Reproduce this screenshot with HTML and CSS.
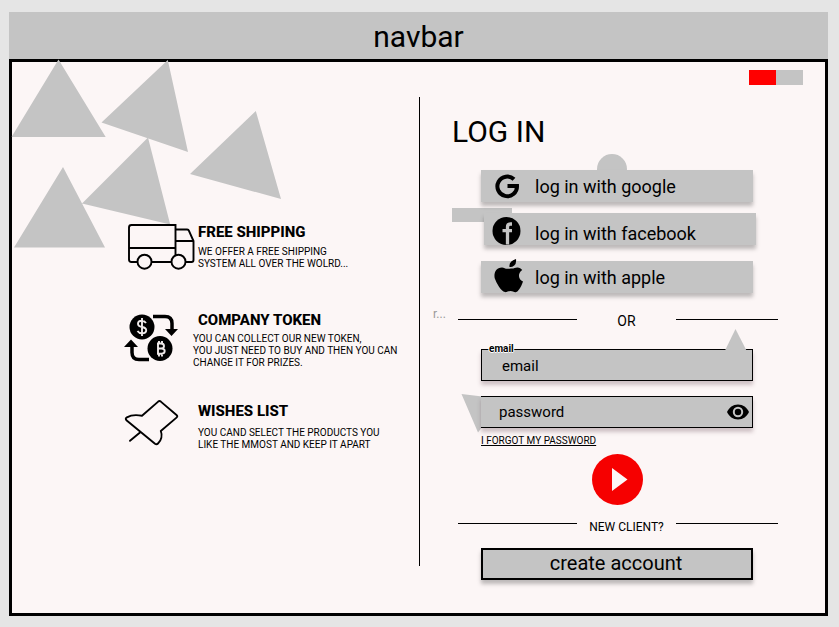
FILE: index.html
```html
<!DOCTYPE html>
<html lang="en">
<head>
<meta charset="utf-8">
<title>Log in</title>
<link rel="stylesheet" href="styles.css">
</head>
<body>
<header class="navbar"><span class="navbar-title">navbar</span></header>
<main class="panel">
  <svg class="shapes" viewBox="0 0 839 627" aria-hidden="true">
    <path d="M58.500 59.500 105.700 137H11.500zM167.800 60 188 152 101.500 122.500zM255.800 111 281 199 190 174zM148 137.500 170.200 224.500 82 203.500zM63 167 105 247.500H14z"/>
    <circle cx="612" cy="169" r="15"/>
    <path d="M452 208h60v14h-60zM461.500 394 503 399 478 432.500z"/>
  </svg>
  <section class="benefits">
    <article class="benefit shipping">
      <svg class="icon" width="70" height="50" viewBox="126 222 70 50" fill="none" stroke="#000" stroke-width="1.900">
        <path d="M138 262h-6.500a2.500 2.500 0 0 1-2.500-2.500V227.500a2.500 2.500 0 0 1 2.500-2.500H175.500V255.500M129 248h46.500M151 262h20.500M185.500 262h6a2 2 0 0 0 2-2V241l-4.500-10a2 2 0 0 0-2-1.500H175.500M175.500 241H193.500"/>
        <circle cx="144.500" cy="261.700" r="7"/><circle cx="178.500" cy="261.700" r="7"/>
      </svg>
      <div class="copy">
        <h2><span>FREE SHIPPING</span></h2>
        <p>WE OFFER A FREE SHIPPING<br>SYSTEM ALL OVER THE WOLRD...</p>
      </div>
    </article>
    <article class="benefit token">
      <svg class="icon" width="54" height="50" viewBox="124 313 54 50">
        <circle cx="142" cy="327" r="12.500"/><circle cx="160" cy="348.500" r="12.500"/>
        <path d="M153 316.500h12q7 0 7 7v7M149 359.500h-10q-7 0-7-7v-6" fill="none" stroke="#000" stroke-width="3.500"/>
        <path d="M165 329h13l-6.500 7zM124 347h14l-7-7.500z"/>
        <path d="M146 323q-1.500-2.200-4.200-2.200-3.800 0-3.800 2.900 0 2.500 4 3.300 4.200.8 4.200 3.300 0 3-4.200 3-3 0-4.500-2.300M142 318v18M157 343.500h4q3 0 3 2.500t-3 2.500h-3.500 4q3.200 0 3.200 2.600t-3.200 2.600H157M158 343v11M159 341v2.500M162 341v2.500M159 354v2.500M162 354v2.500" fill="none" stroke="#eee9e9" stroke-width="1.900"/>
      </svg>
      <div class="copy">
        <h2><span>COMPANY TOKEN</span></h2>
        <p>YOU CAN COLLECT OUR NEW TOKEN,<br>YOU JUST NEED TO BUY AND THEN YOU CAN<br>CHANGE IT FOR PRIZES.</p>
      </div>
    </article>
    <article class="benefit wishes">
      <svg class="icon" width="56" height="48" viewBox="124 399 56 48" fill="none" stroke="#000" stroke-width="1.900" stroke-linejoin="round" stroke-linecap="round">
        <path d="M158.200 401.600q1.300-1 2.600 0L176.500 415q1.600 1.400 0 2.600L160.800 431c1.800 4.500.5 9.500-2.800 12.500q-1.400 1.400-3 .2L126.700 420.400q-2-1.700.2-3C131 415 135.500 414.500 142 415.800zM140 432.500 130 440.800"/>
      </svg>
      <div class="copy">
        <h2><span>WISHES LIST</span></h2>
        <p>YOU CAND SELECT THE PRODUCTS YOU<br>LIKE THE MMOST AND KEEP IT APART</p>
      </div>
    </article>
  </section>
  <div class="divider"></div>
  <section class="login">
    <div class="toggle"><span class="on"></span><span class="off"></span></div>
    <h1>LOG IN</h1>
    <div class="provider google">
      <svg width="34" height="36" viewBox="4 0 34 36"><path d="M24 11.300A9.800 9.800 0 1 0 27 18H17.500" fill="none" stroke="#000" stroke-width="4"/></svg>
      <span>log in with google</span>
    </div>
    <div class="provider facebook">
      <svg width="34" height="36" viewBox="0 0 34 36"><circle cx="14.500" cy="20" r="14"/><path d="M15.500 33.500V16q0-3 3-3H20M10.500 19.700h9.500" fill="none" stroke="#c4c4c4" stroke-width="3.300"/></svg>
      <span>log in with facebook</span>
    </div>
    <div class="provider apple">
      <svg width="34" height="36" viewBox="0 0 34 36"><path d="M22 1q.6 4.500-1.800 6.500T15.500 9Q15 5.500 17.300 3.500T22 1zM18 10.500c2-.1 3.500-1.200 5.500-1.100 2 .1 3.500 1 4.700 2.600-5 3.500-3.800 9.500.8 11.500-1 3-3.800 9.500-6.700 10.500-2 .7-3.500-1-5.800-1-2.300 0-3.700 1.400-5.500 1.100C7 33.500 2.500 25 .8 20.500-.5 15.500 1.700 9.400 8 9.400c2 0 3.300 1.400 5.300 1.400 2 0 2.700-.2 4.700-.3z"/></svg>
      <span>log in with apple</span>
    </div>
    <div class="separator or"><small>r...</small><i class="rule"></i><span>OR</span><i class="rule short"></i></div>
    <div class="field email">
      <label>email</label><span>email</span>
      <svg class="spike" width="22" height="22" viewBox="0 0 22 22"><path d="M10.500 0 21.500 21.500H0z" fill="#c4c4c4"/></svg>
    </div>
    <div class="field password">
      <span>password</span>
      <svg width="22" height="16" viewBox="0 0 22 16"><path d="M11 .5C16 .5 20 3.500 22 8c-2 4.500-6 7.500-11 7.500S2 12.500 0 8C2 3.500 6 .5 11 .5z"/><circle cx="11" cy="8" r="4.200" stroke="#c4c4c4" stroke-width="2"/></svg>
    </div>
    <a class="forgot"><span>I FORGOT MY PASSWORD</span></a>
    <svg class="play" width="51" height="51" viewBox="0 0 51 51"><circle cx="25.500" cy="25.500" r="25.500" fill="#f60000"/><path d="M20 14 35.500 25.500 20 37z" fill="#fcf6f6"/></svg>
    <div class="separator client"><i class="rule"></i><span>NEW CLIENT?</span><i class="rule short"></i></div>
    <div class="create"><span>create account</span></div>
  </section>
</main>
</body>
</html>
```
FILE: styles.css
```css
* { box-sizing: border-box; }
body { margin: 0; width: 839px; height: 627px; padding: 12px 11px 11px 9px; background: #e5e5e5; font-family: Roboto, sans-serif; color: #000; overflow: hidden; }
h1, h2, p { margin: 0; font-weight: 400; }
svg { display: block; flex: none; }
span { white-space: nowrap; }
.navbar { height: 47px; background: #c4c4c4; display: flex; justify-content: center; font-size: 30px; line-height: 50px; }
.panel { height: 557px; border: 3px solid #000; background: #fcf6f6; display: grid; grid-template-columns: 407px 1px 405px; }
.shapes { position: absolute; left: 0; top: 0; width: 839px; height: 627px; fill: #c4c4c4; pointer-events: none; }
.benefits, .login { position: relative; }
.benefits { padding-top: 160px; }
.benefit { display: flex; padding-left: 112px; }
.shipping { padding-left: 114px; height: 91px; }
.token { height: 86px; }
.copy { padding-left: 2px; }
.token .copy { padding-left: 15px; }
.wishes .copy { padding-left: 18px; }
.benefit h2 { font-size: 15px; font-weight: 800; line-height: 20px; }
.token h2 { padding-left: 5px; margin-top: -3px; }
.wishes h2 { margin-top: 2px; }
.benefit p { font-size: 10px; line-height: 12px; margin-top: 4px; white-space: nowrap; }
.token p { margin-top: 3px; }
.wishes p { margin-top: 6px; }
.divider { margin-top: 35px; height: 469px; background: #000; }
.toggle { display: flex; margin: 8px 0 0 329px; }
.toggle span { width: 27px; height: 15px; background: #c4c4c4; }
.toggle .on { background: #f00; }
h1 { margin: 29px 0 20px 32px; font-size: 30px; line-height: 36px; }
.provider { width: 272px; height: 32px; margin-left: 61px; padding-left: 13px; background: #c4c4c4; box-shadow: 0 4px 4px rgba(0,0,0,.25); display: flex; align-items: center; font-size: 18px; line-height: 32px; }
.provider svg { margin-right: 7px; }
.google span { padding-top: 2px; }
.facebook { margin: 11px 0 16px 64px; padding-left: 8px; }
.facebook svg { margin-right: 9px; }
.facebook span { padding-top: 9px; }
.apple span { padding-top: 1px; }
.apple svg { margin-top: -3px; }
.separator { display: flex; align-items: flex-start; }
.rule { width: 119px; height: 1px; background: #000; }
.rule.short { width: 102px; }
.separator span { width: 99px; text-align: center; }
.or { margin-top: 15px; height: 41px; padding-left: 13px; }
.or small { width: 25px; font-size: 12px; line-height: 12px; color: #999; }
.or .rule { margin-top: 11px; }
.or span { font-size: 14px; line-height: 26px; }
.field { width: 272px; height: 32px; margin-left: 61px; background: #c4c4c4; border: 1px solid #000; box-shadow: 0 4px 4px rgba(71,34,52,.25); font-size: 15px; line-height: 32px; display: flex; align-items: center; position: relative; }
.email { padding-left: 20px; }
.email span { padding-top: 2px; }
.email label { position: absolute; left: 7px; top: -6px; font-size: 10px; line-height: 10px; font-weight: 700; text-shadow: 0 1px #fff, 1px 0 #fff, -1px 0 #fff, 0 -1px #fff; }
.spike { position: absolute; left: 243px; top: -21px; }
.password { margin-top: 15px; border-left: 0; padding: 0 3px 0 18px; justify-content: space-between; }
.forgot { display: block; margin: 6px 0 0 61px; height: 20px; font-size: 10px; line-height: 13px; text-decoration: underline; }
.play { margin-left: 172px; }
.client { margin-left: 38px; height: 25px; margin-top: 18px; }
.client span { font-size: 12px; line-height: 9px; }
.create { width: 272px; height: 32px; margin-left: 61px; padding-right: 2px; background: #c4c4c4; border: 2px solid #000; box-shadow: 0 4px 4px rgba(0,0,0,.25); font-size: 20px; line-height: 27px; text-align: center; }
```
